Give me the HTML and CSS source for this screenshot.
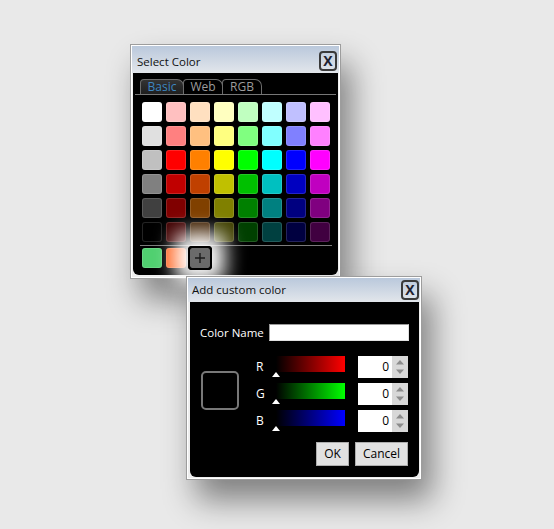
FILE: index.html
```html
<!DOCTYPE html>
<html>
<head>
<meta charset="utf-8">
<link rel="stylesheet" href="styles.css">
</head>
<body>
<div class="desk">
  <div class="win win-select">
    <div class="titlebar"><span class="title">Select Color</span><span class="close">X</span></div>
    <div class="body">
      <div class="tabs"><span class="tab tab-basic active">Basic</span><span class="tab">Web</span><span class="tab">RGB</span></div>
      <div class="grid">
        <span class="sw" style="background:#ffffff"></span><span class="sw" style="background:#ffc0c0"></span><span class="sw" style="background:#ffe0c0"></span><span class="sw" style="background:#ffffc0"></span><span class="sw" style="background:#c0ffc0"></span><span class="sw" style="background:#c0ffff"></span><span class="sw" style="background:#c0c0ff"></span><span class="sw" style="background:#ffc0ff"></span>
        <span class="sw" style="background:#e0e0e0"></span><span class="sw" style="background:#ff8080"></span><span class="sw" style="background:#ffc080"></span><span class="sw" style="background:#ffff80"></span><span class="sw" style="background:#80ff80"></span><span class="sw" style="background:#80ffff"></span><span class="sw" style="background:#8080ff"></span><span class="sw" style="background:#ff80ff"></span>
        <span class="sw" style="background:#c0c0c0"></span><span class="sw" style="background:#ff0000"></span><span class="sw" style="background:#ff8000"></span><span class="sw" style="background:#ffff00"></span><span class="sw" style="background:#00ff00"></span><span class="sw" style="background:#00ffff"></span><span class="sw" style="background:#0000ff"></span><span class="sw" style="background:#ff00ff"></span>
        <span class="sw" style="background:#808080"></span><span class="sw" style="background:#c00000"></span><span class="sw" style="background:#c04000"></span><span class="sw" style="background:#c0c000"></span><span class="sw" style="background:#00c000"></span><span class="sw" style="background:#00c0c0"></span><span class="sw" style="background:#0000c0"></span><span class="sw" style="background:#c000c0"></span>
        <span class="sw" style="background:#404040"></span><span class="sw" style="background:#800000"></span><span class="sw" style="background:#804000"></span><span class="sw" style="background:#808000"></span><span class="sw" style="background:#008000"></span><span class="sw" style="background:#008080"></span><span class="sw" style="background:#000080"></span><span class="sw" style="background:#800080"></span>
        <span class="sw" style="background:#000000"></span><span class="sw" style="background:#400000"></span><span class="sw" style="background:#402000"></span><span class="sw" style="background:#404000"></span><span class="sw" style="background:#004000"></span><span class="sw" style="background:#004040"></span><span class="sw" style="background:#000040"></span><span class="sw" style="background:#400040"></span>
      </div>
      <div class="sep"></div>
      <div class="custom">
        <span class="sw" style="background:#50d070"></span><span class="sw" style="background:#ff6420"></span>
        <span class="add"><svg width="20" height="20" viewBox="0 0 20 20"><path d="M10 5v10M5 10h10" stroke="#1c1c1c" stroke-width="1.4" fill="none"/></svg></span>
      </div>
    </div>
  </div>

  <div class="win win-add">
    <div class="titlebar"><span class="title">Add custom color</span><span class="close">X</span></div>
    <div class="body">
      <div class="name-row"><span class="label">Color Name</span><span class="name-input"></span></div>
      <div class="mixer">
        <div class="preview"></div>
        <div class="sliders">
          <div class="srow"><span class="ch">R</span><span class="bar bar-r"><span class="thumb"></span></span><span class="spin"><span class="spin-val">0</span><span class="spin-btns"><svg width="16" height="22" viewBox="0 0 16 22"><polygon points="4,8.5 12,8.5 8,4" fill="#8c8c8c"/><polygon points="4,13.5 12,13.5 8,18" fill="#8c8c8c"/></svg></span></span></div>
          <div class="srow"><span class="ch">G</span><span class="bar bar-g"><span class="thumb"></span></span><span class="spin"><span class="spin-val">0</span><span class="spin-btns"><svg width="16" height="22" viewBox="0 0 16 22"><polygon points="4,8.5 12,8.5 8,4" fill="#8c8c8c"/><polygon points="4,13.5 12,13.5 8,18" fill="#8c8c8c"/></svg></span></span></div>
          <div class="srow"><span class="ch">B</span><span class="bar bar-b"><span class="thumb"></span></span><span class="spin"><span class="spin-val">0</span><span class="spin-btns"><svg width="16" height="22" viewBox="0 0 16 22"><polygon points="4,8.5 12,8.5 8,4" fill="#8c8c8c"/><polygon points="4,13.5 12,13.5 8,18" fill="#8c8c8c"/></svg></span></span></div>
        </div>
      </div>
      <div class="actions"><span class="btn btn-ok">OK</span><span class="btn btn-cancel">Cancel</span></div>
    </div>
  </div>
</div>
</body>
</html>
```

FILE: styles.css
```css
html, body {
  margin: 0;
  padding: 0;
}
body {
  font-family: "Open Sans", "Noto Sans", "DejaVu Sans", sans-serif;
  font-size: 11.5px;
  color: #000;
}
.desk {
  position: relative;
  width: 554px;
  height: 529px;
  overflow: hidden;
  background: #e9e9e9;
}
.win {
  position: absolute;
  box-sizing: border-box;
  border: 1px solid #9d9d9d;
  background: linear-gradient(to bottom, #b8c7db 0, #e2e6eb var(--th), #eeeeee var(--th));
  box-shadow: inset 0 0 0 1px #ffffff, 10px 20px 30px rgba(0, 0, 0, 0.45);
  display: flex;
  flex-direction: column;
}
.win-select {
  --th: 28px;
  left: 130px;
  top: 44px;
  width: 211px;
  height: 235px;
  padding: 0 2px 3px 2px;
  z-index: 1;
}
.win-add {
  --th: 25px;
  left: 186px;
  top: 276px;
  width: 236px;
  height: 204px;
  padding: 0 2px 2px 3px;
  z-index: 2;
}
.titlebar {
  box-sizing: border-box;
  height: var(--th);
  display: flex;
  align-items: center;
  justify-content: space-between;
  flex: none;
}
.win-select .titlebar {
  padding: 4px 1px 0 4px;
}
.win-add .titlebar {
  padding: 0 0 0 2px;
}
.title {
  color: #111;
  white-space: nowrap;
}
.close {
  box-sizing: border-box;
  width: 18px;
  height: 20px;
  border: 2px solid #3a3a3a;
  border-radius: 4px;
  font-weight: 700;
  font-size: 14px;
  line-height: 16px;
  text-align: center;
  color: #1e2230;
}
.body {
  flex: 1;
  background: #000;
  border-radius: 0 0 6px 6px;
  position: relative;
}

/* tabs */
.tabs {
  display: flex;
  margin: 6px 2px 0 2px;
  padding-left: 5px;
  border-bottom: 1px solid #777;
}
.tab {
  box-sizing: border-box;
  width: 40px;
  height: 15px;
  margin-left: -1px;
  border: 1px solid #6c6c6c;
  border-bottom: none;
  border-radius: 4px 7px 0 0;
  line-height: 13px;
  text-align: center;
  color: #9c9c9c;
  background: #000;
  font-size: 12px;
}
.tab-basic {
  width: 44px;
  margin-left: 0;
}
.tab.active {
  color: #3d87c2;
  background: linear-gradient(to bottom, #333, #1f1f1f);
}

/* swatches */
.grid {
  display: grid;
  grid-template-columns: repeat(8, 20px);
  grid-auto-rows: 20px;
  gap: 4px;
  margin: 7px 0 0 9px;
}
.sw {
  width: 20px;
  height: 20px;
  border-radius: 3px;
  box-shadow: inset 0 0 0 1px rgba(255, 255, 255, 0.14);
}
.sep {
  height: 1px;
  margin: 3px 6px 0 7px;
  background: #7c7c7c;
}
.custom {
  display: flex;
  gap: 4px;
  margin: 2px 0 0 9px;
}
.add {
  position: relative;
  display: block;
  width: 20px;
  height: 20px;
  border-radius: 2px;
  background: #6b6b6b;
  outline: 2px solid #000;
  box-shadow: 0 0 0 2px #000, 0 0 20px 15px #ffffff;
}
.add svg {
  display: block;
}

/* add custom color */
.win-add .body {
  padding: 22px 10px 0 10px;
  box-sizing: border-box;
}
.name-row {
  display: flex;
  align-items: center;
  height: 17px;
}
.label {
  color: #fff;
  white-space: nowrap;
}
.name-input {
  margin-left: auto;
  box-sizing: border-box;
  width: 140px;
  height: 17px;
  background: #fff;
  border: 1px solid #9a9a9a;
  border-bottom-color: #e0e0e0;
  border-right-color: #e0e0e0;
}
.mixer {
  display: flex;
  margin-top: 15px;
}
.preview {
  box-sizing: border-box;
  width: 38px;
  height: 39px;
  margin: 15px 0 0 1px;
  border: 2px solid #787878;
  border-radius: 5px;
  background: #000;
}
.sliders {
  display: flex;
  flex-direction: column;
  gap: 5px;
  margin-left: 17px;
}
.srow {
  display: flex;
  align-items: flex-start;
  height: 22px;
}
.ch {
  width: 20px;
  line-height: 22px;
  color: #fff;
  font-size: 12px;
}
.bar {
  position: relative;
  width: 69px;
  height: 16px;
}
.bar-r { background: linear-gradient(to right, #000, #ff0000); }
.bar-g { background: linear-gradient(to right, #000, #00ff00); }
.bar-b { background: linear-gradient(to right, #000, #0000ff); }
.thumb {
  position: absolute;
  left: -4px;
  top: 16px;
  width: 0;
  height: 0;
  border-left: 4.5px solid transparent;
  border-right: 4.5px solid transparent;
  border-bottom: 5px solid #fff;
}
.spin {
  display: flex;
  margin-left: 13px;
  height: 22px;
}
.spin-val {
  box-sizing: border-box;
  width: 34px;
  height: 22px;
  background: #fff;
  text-align: right;
  padding-right: 3px;
  line-height: 22px;
  font-size: 12px;
  color: #000;
}
.spin-btns {
  width: 16px;
  height: 22px;
  background: #d8d8d8;
}
.spin-btns svg {
  display: block;
}
.actions {
  display: flex;
  justify-content: flex-end;
  gap: 6px;
  margin: 10px 1px 0 0;
}
.btn {
  box-sizing: border-box;
  height: 24px;
  line-height: 22px;
  text-align: center;
  background: #e1e1e1;
  border: 1px solid #adadad;
  color: #000;
  font-size: 12px;
}
.btn-ok { width: 33px; }
.btn-cancel { width: 53px; }
```
